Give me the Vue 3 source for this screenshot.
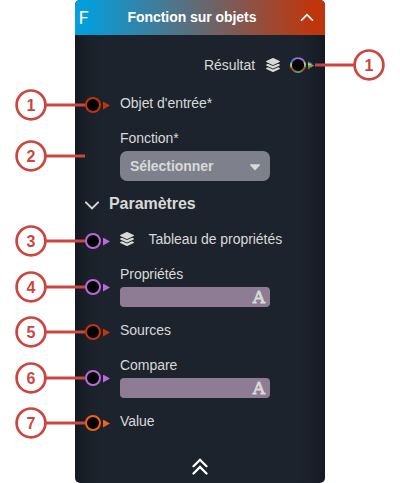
<script setup>
import { h } from 'vue'

const LAYERS =
  'M12.41 148.02l232.94 105.67c6.8 3.09 14.49 3.09 21.29 0l232.94-105.67c16.55-7.51 16.55-32.52 0-40.03L266.65 2.31a25.607 25.607 0 0 0-21.29 0L12.41 107.98c-16.55 7.51-16.55 32.53 0 40.04zm487.18 88.28l-58.09-26.33-161.64 73.27c-7.56 3.43-15.59 5.17-23.86 5.17s-16.29-1.74-23.86-5.17L70.51 209.97l-58.1 26.33c-16.55 7.5-16.55 32.5 0 40l232.94 105.59c6.8 3.08 14.49 3.08 21.29 0L499.59 276.3c16.55-7.5 16.55-32.5 0-40zm0 127.8l-57.87-26.23-161.86 73.37c-7.56 3.43-15.59 5.17-23.86 5.17s-16.29-1.74-23.86-5.17L70.29 337.87 12.41 364.1c-16.55 7.5-16.55 32.5 0 40l232.94 105.59c6.8 3.08 14.49 3.08 21.29 0L499.59 404.1c16.55-7.5 16.55-32.5 0-40z'

const LayersIcon = () =>
  h('svg', { width: 14, height: 14, viewBox: '0 0 512 512', fill: '#d9d9d9' }, [h('path', { d: LAYERS })])

const Callout = ({ mark, right }) => {
  const cx = right ? 54 : 16
  return h('svg', { width: 70, height: 32, viewBox: '0 0 70 32', fill: '#cb463f' }, [
    h('rect', { x: right ? 0 : 30, y: 14.5, width: 40, height: 3 }),
    h('circle', { cx, cy: 15.9, r: 14.4, fill: '#fff', stroke: '#cb463f', 'stroke-width': 2.7 }),
    h('text', { x: cx, y: 21.6, 'text-anchor': 'middle', 'font-size': 16, 'font-weight': 'bold' }, String(mark)),
  ])
}
Callout.props = ['mark', 'right']

const params = [
  { mark: 3, label: 'Tableau de propriétés', tone: 'violet', kind: 'list' },
  { mark: 4, label: 'Propriétés', tone: 'violet', kind: 'text' },
  { mark: 5, label: 'Sources', tone: 'red', kind: 'plain' },
  { mark: 6, label: 'Compare', tone: 'violet', kind: 'text' },
  { mark: 7, label: 'Value', tone: 'orange', kind: 'plain' },
]
</script>

<template>
  <main class="stage">
    <section class="node">
      <header class="head">
        <span class="letter">F</span>
        <h1 class="title">Fonction sur objets</h1>
        <svg class="fold" width="14" height="9" viewBox="0 0 14 9">
          <path d="M1.6 7.1 7 1.7l5.4 5.4" fill="none" stroke="#fff" stroke-width="1.8" stroke-linecap="round" />
        </svg>
      </header>

      <div class="result">
        <span>Résultat</span>
        <LayersIcon class="stack" />
        <span class="port out">
          <svg width="26" height="16" viewBox="0 0 26 16">
            <circle cx="8" cy="8" r="7.5" fill="#000" />
            <g fill="none" stroke-width="1.9">
              <path d="M3.1 3.1A7 7 0 0 1 12.9 3.1" stroke="#b06bdc" />
              <path d="M1.2 6.2A7 7 0 0 1 4.2 2.1" stroke="#4a78d0" />
              <path d="M11.8 2.1A7 7 0 0 1 14.3 5" stroke="#5a86d8" />
              <path d="M14.3 5A7 7 0 0 1 15 8" stroke="#e0c552" />
              <path d="M1 8A7 7 0 0 1 1.4 5.7" stroke="#7cc9b0" />
              <path d="M15 8A7 7 0 0 1 14.5 10.6" stroke="#5cc0a4" />
              <path d="M1.5 10.6A7 7 0 0 1 1 8" stroke="#e0b24a" />
              <path d="M4.3 13.9A7 7 0 0 1 1.5 10.6M14.5 10.6A7 7 0 0 1 11.7 13.9" stroke="#cf4516" />
              <path d="M11.9 13.8A7 7 0 0 1 4.1 13.8" stroke="#36a866" />
            </g>
            <path d="M18 4.3v2.9h5z" fill="#5878c8" />
            <path d="M18 6l5.8 2.2L18 8.8z" fill="#e0c552" />
            <path d="M18 8l6.5.3-3.2 1.9H18z" fill="#4eb58c" />
            <path d="M18 9.8h4l-4 2.6z" fill="#c94816" />
          </svg>
        </span>
        <Callout class="callout right" :mark="1" :right="true" />
      </div>

      <div class="row entry">
        <Callout class="callout" :mark="1" />
        <span class="port"><i class="ring"></i><i class="arrow"></i></span>
        <span class="label">Objet d'entrée*</span>
      </div>

      <div class="row func">
        <Callout class="callout" :mark="2" />
        <span class="port"></span>
        <div class="field">
          <span class="caption">Fonction*</span>
          <div class="select">
            <span>Sélectionner</span>
            <svg width="12" height="7" viewBox="0 0 12 7">
              <path d="M1.6.9h8.8L6 5.7z" fill="#d9d9d9" stroke="#d9d9d9" stroke-width="1.2" stroke-linejoin="round" />
            </svg>
          </div>
        </div>
      </div>

      <div class="group">
        <svg width="14" height="9" viewBox="0 0 14 9">
          <path d="M.9 1.3 7 7.4l6.1-6.1" fill="none" stroke="#d9d9d9" stroke-width="1.9" stroke-linecap="round" />
        </svg>
        <h2 class="heading">Paramètres</h2>
      </div>

      <div class="params">
        <div v-for="p in params" :key="p.mark" class="row" :class="p.kind">
          <Callout class="callout" :mark="p.mark" />
          <span class="port" :class="p.tone"><i class="ring"></i><i class="arrow"></i></span>
          <div v-if="p.kind === 'text'" class="field">
            <span class="caption">{{ p.label }}</span>
            <div class="input"><span class="type">A</span></div>
          </div>
          <span v-else class="label">
            <LayersIcon v-if="p.kind === 'list'" />
            {{ p.label }}
          </span>
        </div>
      </div>

      <footer class="foot">
        <svg width="16" height="17" viewBox="0 0 16 17">
          <path d="M1.5 8.3 8 1.8l6.5 6.5M1.5 15.5 8 9l6.5 6.5" fill="none" stroke="#fff" stroke-width="2.3" stroke-linecap="round" />
        </svg>
      </footer>
    </section>
  </main>
</template>

<style>
body {
  margin: 0;
  background: #fff;
}
</style>

<style scoped>
.stage {
  width: 400px;
  height: 483px;
  overflow: hidden;
  font: 14px/16px "Liberation Sans", Arial, sans-serif;
  letter-spacing: -0.05px;
  color: #d9d9d9;
}
.node {
  box-sizing: border-box;
  width: 250px;
  height: 483px;
  margin: 0 auto;
  border-radius: 5px;
  background: linear-gradient(90deg, #141920 0, #1a212a 14px, #1c232c 30px, #1c232c 220px, #1a2029 236px, #151a22 100%);
}
.head {
  display: grid;
  grid-template-columns: 30px 174px 46px;
  align-items: center;
  height: 35px;
  border-radius: 5px 5px 0 0;
  background: linear-gradient(90deg, #049edc 4%, #bf360c 95%);
  color: #fff;
}
.letter {
  padding: 0 0 2px 3.6px;
  font: 18px/20px Lato, sans-serif;
}
.title {
  margin: 0;
  padding-bottom: 1px;
  text-align: center;
  font-size: 14px;
  line-height: 16px;
  white-space: nowrap;
}
.fold {
  margin-left: 21px;
}
.result {
  position: relative;
  display: flex;
  align-items: center;
  justify-content: flex-end;
  height: 30px;
  margin-top: 15px;
  padding-right: 9px;
}
.stack {
  margin: 0 10px 0 11px;
}
.row {
  position: relative;
  display: flex;
  align-items: center;
  height: 30px;
  padding-left: 10px;
}
.entry {
  margin-top: 10px;
}
.func {
  height: 50px;
  margin-top: 11px;
}
.port {
  display: flex;
  align-items: center;
  gap: 2px;
  width: 35px;
  color: #c0360c;
}
.port.out {
  width: 26px;
}
.port.violet {
  color: #bb69dc;
}
.port.orange {
  color: #ef6416;
}
.ring {
  box-sizing: border-box;
  width: 16px;
  height: 16px;
  border: 2px solid currentColor;
  border-radius: 50%;
  background: #000;
}
.arrow {
  width: 7px;
  height: 8px;
  margin-top: 1px;
  background: currentColor;
  clip-path: polygon(0 0, 100% 50%, 0 100%);
}
.label {
  display: flex;
  align-items: center;
  gap: 14.5px;
  padding-bottom: 4px;
}
.field {
  display: grid;
  gap: 6px;
  width: 150px;
}
.caption {
  line-height: 14px;
}
.select {
  box-sizing: border-box;
  display: flex;
  align-items: center;
  justify-content: space-between;
  height: 30px;
  padding: 0 9px 0 10px;
  border-radius: 7px;
  background: #7e818b;
  font-weight: bold;
}
.select svg {
  margin-top: 2px;
}
.input {
  box-sizing: border-box;
  display: flex;
  align-items: center;
  justify-content: flex-end;
  height: 20px;
  padding-right: 5px;
  border-radius: 4px;
  background: #8d7c93;
}
.type {
  padding-top: 1px;
  font: 17px/19px "DejaVu Serif", serif;
  -webkit-text-stroke: 0.9px currentColor;
}
.group {
  display: flex;
  align-items: center;
  gap: 10px;
  height: 28px;
  margin-top: 9px;
  padding-left: 10px;
}
.group svg {
  margin-top: 2px;
}
.heading {
  margin: 0;
  font-size: 16px;
  line-height: 18px;
}
.params {
  display: grid;
  margin-top: 8px;
}
.row.text {
  height: 40px;
  padding-top: 11px;
  padding-bottom: 10px;
}
.foot {
  display: flex;
  justify-content: center;
  margin-top: 20px;
}
.callout {
  position: absolute;
  left: -60px;
  top: 50%;
  margin-top: -16px;
}
.callout.right {
  left: 240px;
}
.row.text > .callout {
  margin-top: -15.5px;
}
</style>
